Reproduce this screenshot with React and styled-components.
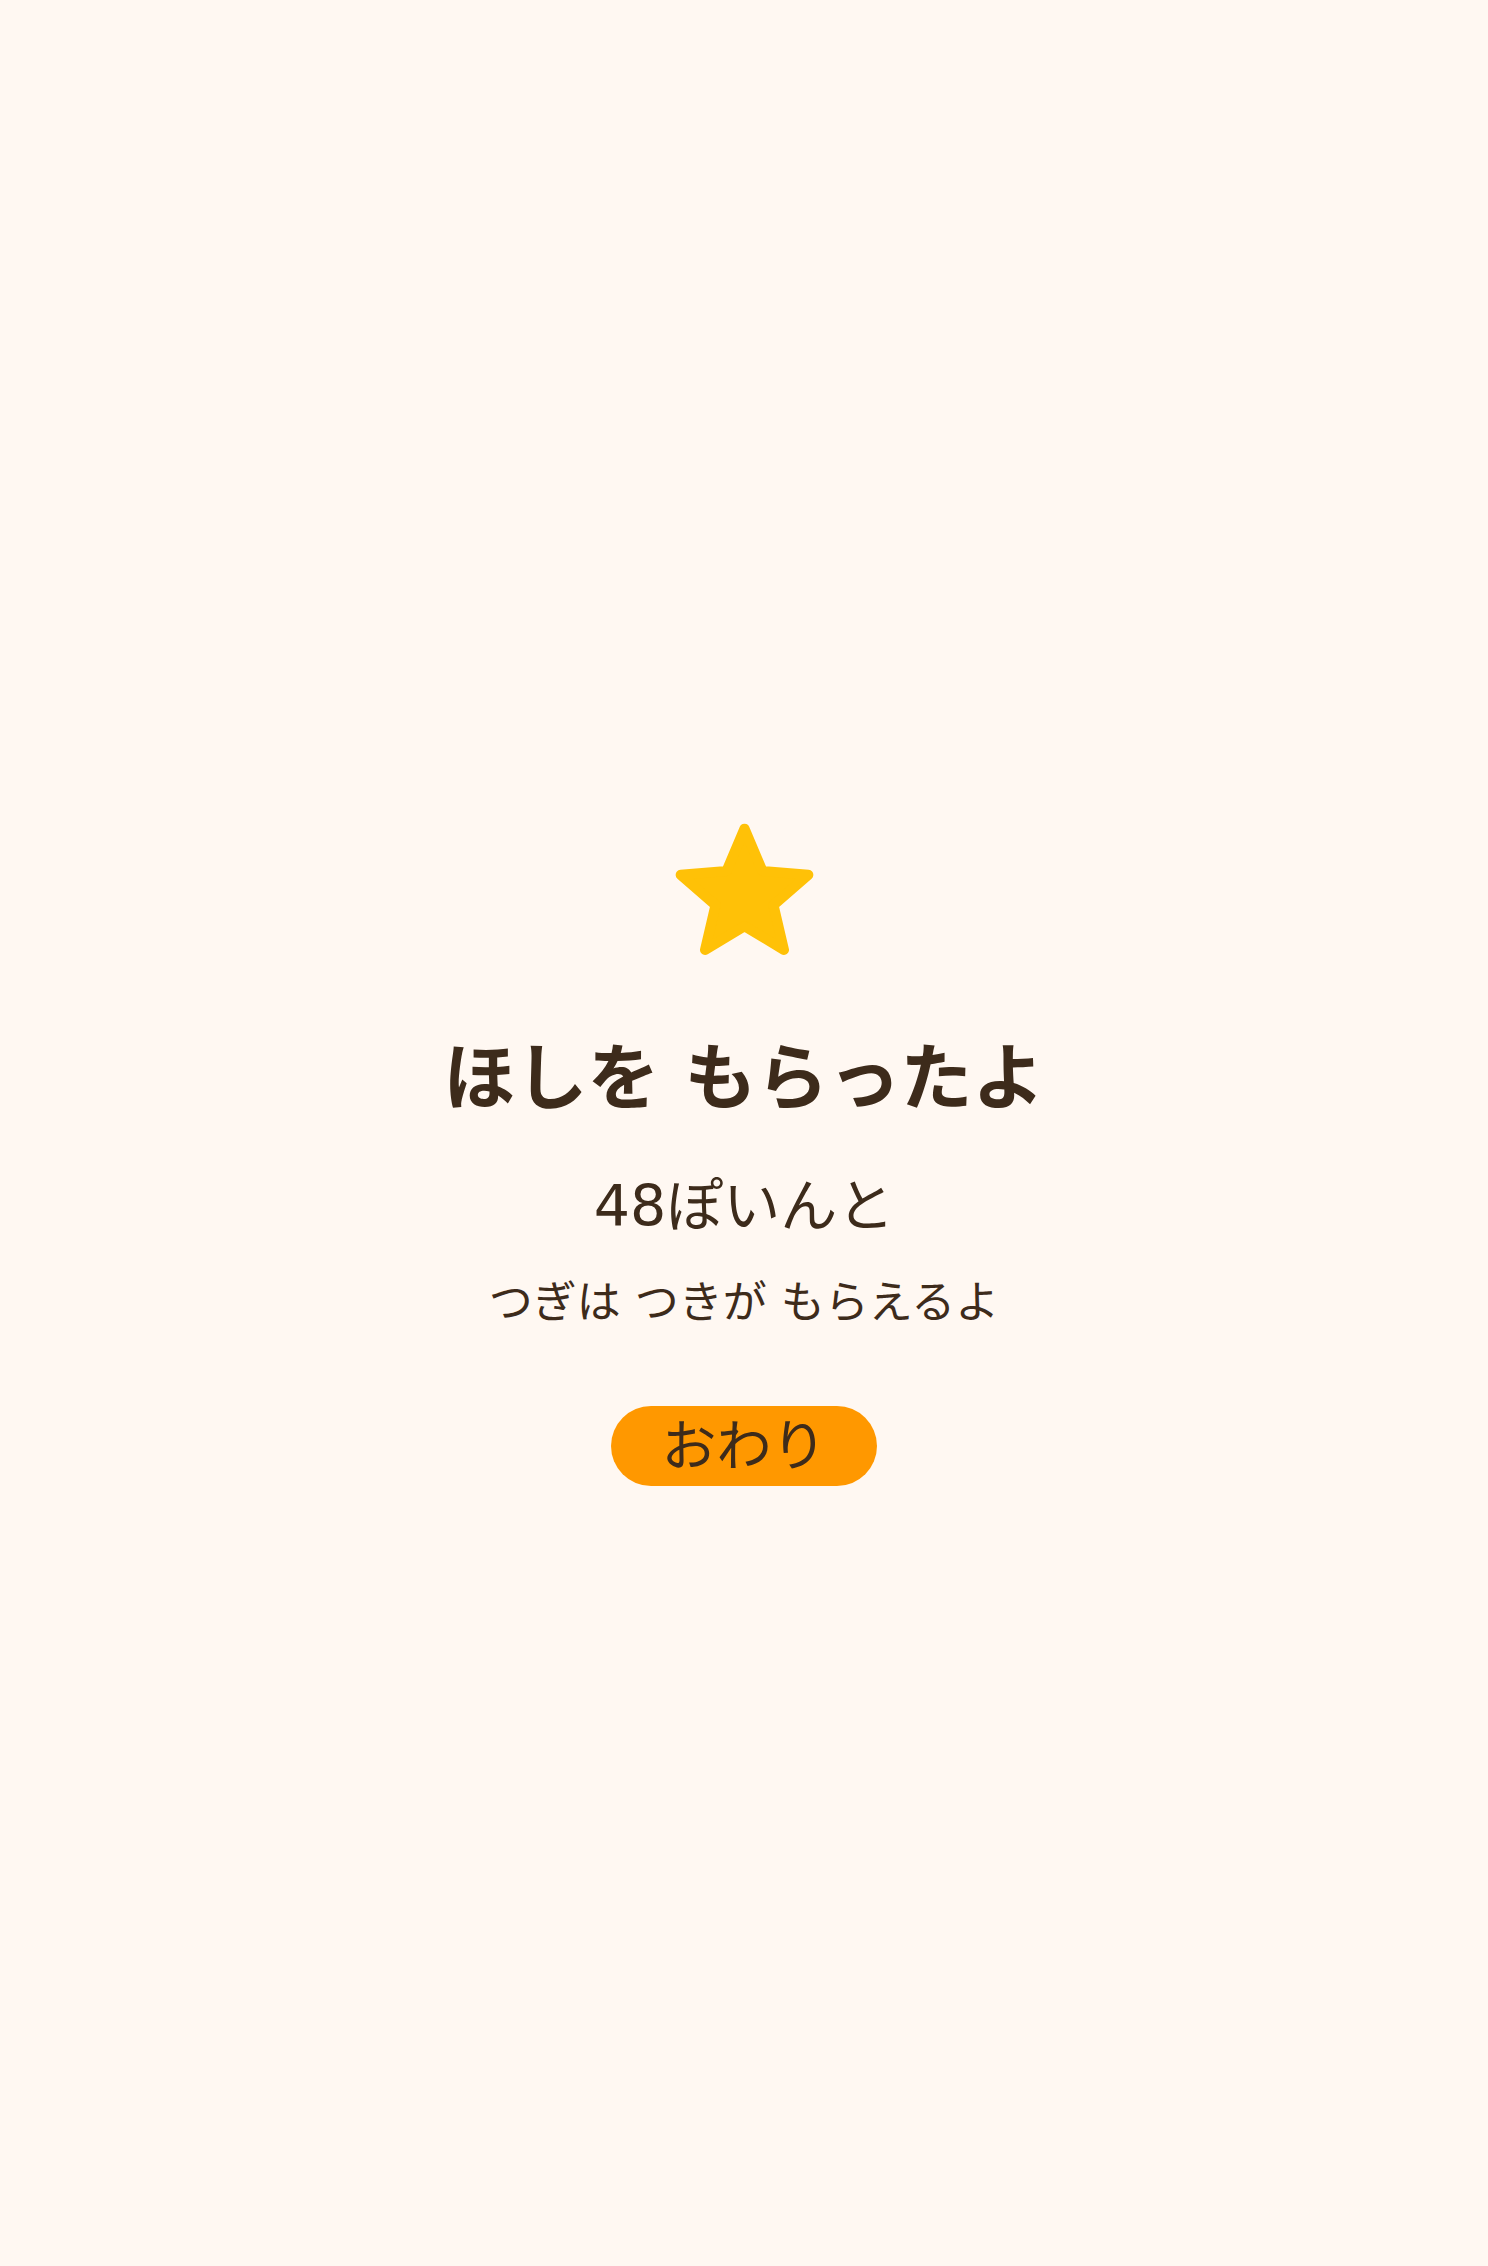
import React from "react";
import styled, { createGlobalStyle } from "styled-components";

const GlobalStyle = createGlobalStyle`
  html, body {
    margin: 0;
    padding: 0;
    background: #fff8f2;
  }
  body {
    font-family: "DejaVu Sans", "Noto Sans CJK JP", sans-serif;
    color: #3d2b1b;
  }
`;

const Screen = styled.main`
  min-height: 100vh;
  box-sizing: border-box;
  padding-top: 36px;
  display: flex;
  flex-direction: column;
  align-items: center;
  justify-content: center;
  text-align: center;
`;

const StarIcon = styled.svg`
  width: 153px;
  height: 153px;
  display: block;
`;

const Title = styled.h1`
  margin: 63px 0 0;
  font-size: 72px;
  line-height: 1.3;
  font-weight: 700;
`;

const Points = styled.p`
  margin: 44px 0 0;
  font-size: 57px;
  line-height: 1.3;
  font-weight: 400;
`;

const Next = styled.p`
  margin: 28px 0 0;
  font-size: 44px;
  line-height: 1.4;
  font-weight: 400;
`;

const FinishButton = styled.button`
  margin-top: 73px;
  height: 80px;
  padding: 0 50px;
  border: none;
  border-radius: 40px;
  background: #ff9800;
  color: #3d2b1b;
  font-family: inherit;
  font-size: 55px;
  line-height: 80px;
  cursor: pointer;
`;

const Star = () => (
  <StarIcon viewBox="0 0 24 24" aria-hidden="true">
    <polygon
      points="12,2 14.81,8.63 22,9.24 16.54,13.97 18.18,21 12,17.27 5.82,21 7.46,13.97 2,9.24 9.19,8.63"
      fill="#ffc107"
      stroke="#ffc107"
      strokeWidth="1.6"
      strokeLinejoin="round"
    />
  </StarIcon>
);

export default function App() {
  return (
    <>
      <GlobalStyle />
      <Screen>
        <Star />
        <Title>ほしを もらったよ</Title>
        <Points>48ぽいんと</Points>
        <Next>つぎは つきが もらえるよ</Next>
        <FinishButton>おわり</FinishButton>
      </Screen>
    </>
  );
}
